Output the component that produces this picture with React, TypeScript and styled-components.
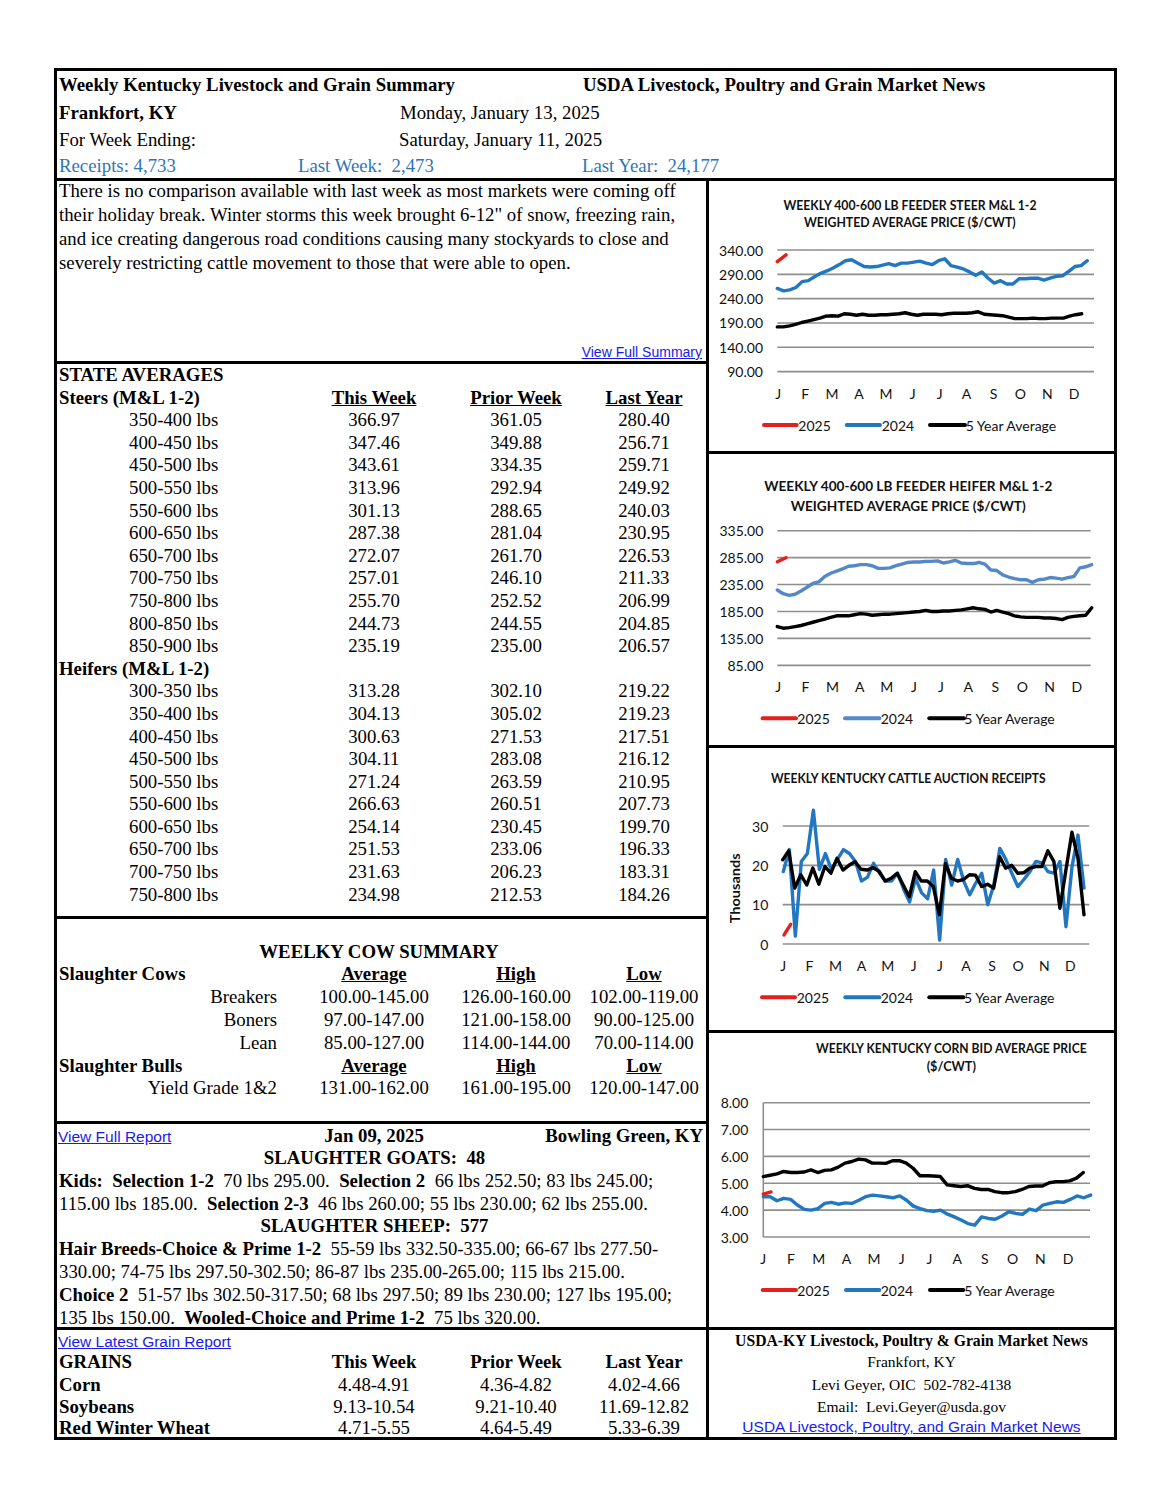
import React from "react";
import styled, { createGlobalStyle } from "styled-components";

const GlobalStyle = createGlobalStyle`
  *, *::before, *::after { box-sizing: border-box; }
  html, body { margin: 0; padding: 0; background: #ffffff; }
  body { font-family: "Liberation Serif", "Times New Roman", serif; color: #000; }
`;

const BLUE = "#2277c0";
const BLUE_LIGHT = "#5588c9";
const RED = "#e4201c";
const GRID = "#8e8e8e";
const LINK = "#1a1aee";
const COLS = "247px 140px 144px 112px 1fr";

/* ---------- page frame ---------- */
const Page = styled.div`
  margin: 68px 0 0 54px;
  width: 1063px;
  height: 1372px;
  border: 3px solid #000;
  display: flex;
  flex-direction: column;
  font-size: 18.8px;
`;

const Header = styled.header`
  flex: none;
  height: 110px;
  border-bottom: 3px solid #000;
  padding-left: 2px;
  display: grid;
  grid-template-rows: 28px 27px 27px 25px;
`;

const HeaderRow = styled.div<{ $cols: string; $blue?: boolean }>`
  display: grid;
  grid-template-columns: ${(p) => p.$cols};
  align-items: center;
  white-space: pre;
  color: ${(p) => (p.$blue ? "#2e75b6" : "#000")};
`;

const B = styled.span`
  font-weight: 700;
`;

const Main = styled.div`
  flex: none;
  display: flex;
  height: 1149px;
  border-bottom: 3px solid #000;
`;

const LeftCol = styled.div`
  width: 652px;
  flex: none;
  border-right: 3px solid #000;
  display: flex;
  flex-direction: column;
`;

const RightCol = styled.div`
  width: 405px;
  flex: none;
  display: flex;
  flex-direction: column;
`;

const Block = styled.section<{ $h: number; $last?: boolean; $pt?: number }>`
  flex: none;
  height: ${(p) => p.$h}px;
  padding-top: ${(p) => p.$pt ?? 0}px;
  border-bottom: ${(p) => (p.$last ? "none" : "3px solid #000")};
`;

/* ---------- summary ---------- */
const SummaryBlock = styled(Block)`
  display: flex;
  flex-direction: column;
  justify-content: space-between;
  padding: 0 4px 0 2px;
`;

const SummaryText = styled.p`
  margin: -2px 0 0;
  line-height: 24px;
  white-space: nowrap;
`;

const LinkRow = styled.div`
  text-align: right;
  line-height: 18px;
`;

const Link = styled.a<{ $size: number }>`
  font-family: "Liberation Sans", Arial, sans-serif;
  font-size: ${(p) => p.$size}px;
  color: ${LINK};
  text-decoration: underline;
`;

/* ---------- tables ---------- */
const Row = styled.div<{ $h: number }>`
  display: grid;
  grid-template-columns: ${COLS};
  height: ${(p) => p.$h}px;
  line-height: ${(p) => p.$h}px;
  white-space: pre;
`;

const Label = styled.div<{ $indent?: number; $bold?: boolean; $alignRight?: number }>`
  padding-left: ${(p) => (p.$alignRight !== undefined ? 0 : p.$indent ?? 2)}px;
  padding-right: ${(p) => p.$alignRight ?? 0}px;
  text-align: ${(p) => (p.$alignRight !== undefined ? "right" : "left")};
  font-weight: ${(p) => (p.$bold ? 700 : 400)};
`;

const Cell = styled.div<{ $bold?: boolean; $u?: boolean; $span?: string; $align?: string; $pr?: number }>`
  text-align: ${(p) => p.$align ?? "center"};
  font-weight: ${(p) => (p.$bold ? 700 : 400)};
  text-decoration: ${(p) => (p.$u ? "underline" : "none")};
  grid-column: ${(p) => p.$span ?? "auto"};
  padding-right: ${(p) => p.$pr ?? 0}px;
`;

const Heading = styled.div<{ $h: number; $pr: number }>`
  height: ${(p) => p.$h}px;
  line-height: ${(p) => p.$h}px;
  text-align: center;
  font-weight: 700;
  padding-right: ${(p) => p.$pr}px;
  white-space: pre;
`;

const TextLine = styled.div<{ $h: number }>`
  height: ${(p) => p.$h}px;
  line-height: ${(p) => p.$h}px;
  padding-left: 2px;
  white-space: pre;
`;

/* ---------- footer ---------- */
const FOOT_ROWS = "21px 22px 23px 21px 20px";

const Footer = styled.footer`
  flex: none;
  display: flex;
  height: 107px;
`;

const GrainBlock = styled.div`
  width: 652px;
  flex: none;
  border-right: 3px solid #000;
  display: grid;
  grid-template-rows: ${FOOT_ROWS};
`;

const GrainRow = styled.div`
  display: grid;
  grid-template-columns: ${COLS};
  align-items: center;
  white-space: pre;
`;

const ContactBlock = styled.div`
  width: 405px;
  flex: none;
  display: grid;
  grid-template-rows: ${FOOT_ROWS};
  font-size: 15.5px;
`;

const ContactLine = styled.div<{ $bold?: boolean }>`
  display: flex;
  align-items: center;
  justify-content: center;
  white-space: pre;
  font-weight: ${(p) => (p.$bold ? 700 : 400)};
  font-size: ${(p) => (p.$bold ? 15.7 : 15.5)}px;
`;

/* ---------- charts ---------- */
const ChartBox = styled(Block)`
  overflow: hidden;
`;

const ChartSvg = styled.svg`
  display: block;
  font-family: Lato, "Open Sans", "Liberation Sans", sans-serif;
`;

interface SeriesSpec {
  color: string;
  values: number[];
  x0: number;
  x1: number;
  w?: number;
}
interface LegendItem {
  color: string;
  x0: number;
  x1: number;
  tx: number;
  label: string;
}
interface ChartSpec {
  h: number;
  title: { text: string; cx: number; y: number; w: number; size: number }[];
  ticks: { label: string; value: number }[];
  y: (v: number) => number;
  labelX: number;
  gridX0: number;
  gridX1: number;
  yAxis?: boolean;
  monthY: number;
  monthX0: number;
  monthStep: number;
  legendY: number;
  legend: LegendItem[];
  series: SeriesSpec[];
  axisTitle?: { text: string; x: number; y: number; w: number };
}

const MONTHS = ["J", "F", "M", "A", "M", "J", "J", "A", "S", "O", "N", "D"];

function Chart({ spec }: { spec: ChartSpec }) {
  const top = spec.y(spec.ticks[0].value);
  const bottom = spec.y(spec.ticks[spec.ticks.length - 1].value);
  return (
    <ChartSvg width={405} height={spec.h} viewBox={`0 0 405 ${spec.h}`}>
      {spec.title.map((t) => (
        <text
          key={t.text}
          x={t.cx}
          y={t.y}
          textAnchor="middle"
          dominantBaseline="central"
          fontSize={t.size}
          fontWeight={700}
          textLength={t.w}
          lengthAdjust="spacingAndGlyphs"
          fill="#111"
        >
          {t.text}
        </text>
      ))}
      {spec.ticks.map((t) => (
        <g key={t.label}>
          <line x1={spec.gridX0} x2={spec.gridX1} y1={spec.y(t.value)} y2={spec.y(t.value)} stroke={GRID} strokeWidth={1.6} />
          <text x={spec.labelX} y={spec.y(t.value)} textAnchor="end" dominantBaseline="central" fontSize={14} fill="#111">
            {t.label}
          </text>
        </g>
      ))}
      {spec.yAxis && <line x1={spec.gridX0} x2={spec.gridX0} y1={top} y2={bottom} stroke={GRID} strokeWidth={1.6} />}
      {spec.axisTitle && (
        <text
          x={spec.axisTitle.x}
          y={spec.axisTitle.y}
          transform={`rotate(-90 ${spec.axisTitle.x} ${spec.axisTitle.y})`}
          textAnchor="middle"
          dominantBaseline="central"
          fontSize={13.5}
          fontWeight={700}
          textLength={spec.axisTitle.w}
          lengthAdjust="spacingAndGlyphs"
          fill="#111"
        >
          {spec.axisTitle.text}
        </text>
      )}
      {spec.series.map((s, si) => {
        const n = s.values.length;
        const pts = s.values
          .map((v, i) => `${(s.x0 + ((s.x1 - s.x0) * i) / (n - 1)).toFixed(2)},${spec.y(v).toFixed(2)}`)
          .join(" ");
        return (
          <polyline
            key={si}
            points={pts}
            fill="none"
            stroke={s.color}
            strokeWidth={s.w ?? 3.4}
            strokeLinejoin="round"
            strokeLinecap="round"
          />
        );
      })}
      {MONTHS.map((m, i) => (
        <text
          key={i}
          x={spec.monthX0 + spec.monthStep * i}
          y={spec.monthY}
          textAnchor="middle"
          dominantBaseline="central"
          fontSize={14}
          fill="#111"
        >
          {m}
        </text>
      ))}
      {spec.legend.map((l) => (
        <g key={l.label}>
          <line x1={l.x0} x2={l.x1} y1={spec.legendY} y2={spec.legendY} stroke={l.color} strokeWidth={4} strokeLinecap="round" />
          <text x={l.tx} y={spec.legendY} dominantBaseline="central" fontSize={14} fill="#111">
            {l.label}
          </text>
        </g>
      ))}
    </ChartSvg>
  );
}

const legendSet = (blue: string, red: number[], bl: number[], bk: number[]): LegendItem[] => [
  { color: RED, x0: red[0], x1: red[1], tx: red[2], label: "2025" },
  { color: blue, x0: bl[0], x1: bl[1], tx: bl[2], label: "2024" },
  { color: "#000", x0: bk[0], x1: bk[1], tx: bk[2], label: "5 Year Average" },
];

const steerChart: ChartSpec = {
  h: 270,
  title: [
    { text: "WEEKLY 400-600 LB FEEDER STEER M&L 1-2", cx: 201, y: 24, w: 253, size: 12.5 },
    { text: "WEIGHTED AVERAGE PRICE ($/CWT)", cx: 200.8, y: 41.7, w: 211.7, size: 12.5 },
  ],
  ticks: [340, 290, 240, 190, 140, 90].map((v) => ({ label: v.toFixed(2), value: v })),
  y: (v) => 69 + (340 - v) * 0.4866,
  labelX: 54,
  gridX0: 68.3,
  gridX1: 385,
  monthY: 212.3,
  monthX0: 69.3,
  monthStep: 26.9,
  legendY: 244,
  legend: legendSet(BLUE, [55, 87.7, 89.3], [137.7, 171, 172.7], [221, 256, 256.7]),
  series: [
    {
      color: "#000",
      x0: 68.3,
      x1: 372.7,
      values: [182, 182, 184, 187, 191, 194, 197, 200, 204, 205, 204, 209, 208, 206, 208, 206, 206, 207, 207, 208, 209, 211, 208, 206, 208, 208, 208, 207, 209, 210, 210, 210, 211, 213, 208, 207, 206, 205, 202, 199, 199, 199, 200, 199, 199, 200, 200, 200, 204, 207, 209],
    },
    {
      color: BLUE,
      x0: 68.3,
      x1: 378.3,
      values: [261, 256, 258, 263, 275, 277, 285, 292, 297, 303, 310, 318, 320, 313, 306, 305, 306, 309, 312, 308, 313, 313, 315, 317, 313, 310, 318, 322, 308, 305, 301, 295, 288, 295, 282, 272, 277, 270, 270, 281, 281, 282, 282, 278, 282, 286, 287, 296, 306, 308, 318],
    },
    { color: RED, x0: 68.3, x1: 77, values: [316, 330] },
  ],
};

const heiferChart: ChartSpec = {
  h: 291,
  title: [
    { text: "WEEKLY 400-600 LB FEEDER HEIFER M&L 1-2", cx: 199.3, y: 31, w: 288, size: 14 },
    { text: "WEIGHTED AVERAGE PRICE ($/CWT)", cx: 199.2, y: 51, w: 235, size: 14 },
  ],
  ticks: [335, 285, 235, 185, 135, 85].map((v) => ({ label: v.toFixed(2), value: v })),
  y: (v) => 76.7 + (335 - v) * 0.5386,
  labelX: 54.3,
  gridX0: 68.3,
  gridX1: 381.7,
  monthY: 232.7,
  monthX0: 69.3,
  monthStep: 27.13,
  legendY: 264.3,
  legend: legendSet(BLUE_LIGHT, [53.7, 87, 88.3], [136, 170.3, 171.7], [220.3, 255, 255.3]),
  series: [
    {
      color: "#000",
      x0: 68.3,
      x1: 382.7,
      values: [157, 154, 155, 157, 159, 162, 165, 168, 171, 174, 177, 177, 177, 179, 181, 180, 178, 179, 180, 180, 181, 182, 183, 184, 185, 187, 185, 185, 186, 186, 187, 188, 190, 192, 190, 189, 184, 187, 184, 181, 177, 175, 174, 174, 174, 173, 173, 172, 170, 174, 176, 177, 178, 192],
    },
    {
      color: BLUE_LIGHT,
      x0: 68.3,
      x1: 382.7,
      values: [225, 218, 215, 217, 223, 230, 237, 240, 250, 256, 260, 264, 269, 270, 272, 272, 270, 265, 265, 266, 270, 273, 276, 277, 277, 278, 278, 279, 275, 277, 280, 275, 274, 274, 276, 273, 262, 261, 253, 249, 246, 244, 244, 239, 244, 245, 248, 247, 245, 248, 250, 266, 268, 272],
    },
    { color: RED, x0: 68.3, x1: 77, values: [277.4, 284.8] },
  ],
};

const receiptsChart: ChartSpec = {
  h: 282,
  title: [{ text: "WEEKLY KENTUCKY CATTLE AUCTION RECEIPTS", cx: 199.3, y: 30.3, w: 274.7, size: 12.5 }],
  ticks: [30, 20, 10, 0].map((v) => ({ label: String(v), value: v })),
  y: (v) => 196 - v * 3.933,
  labelX: 59.3,
  gridX0: 73.7,
  gridX1: 380.3,
  monthY: 217,
  monthX0: 74.3,
  monthStep: 26.1,
  legendY: 249.3,
  legend: legendSet(BLUE, [53, 86, 87.7], [136.3, 170.3, 171.7], [220.3, 254.3, 255]),
  axisTitle: { text: "Thousands", x: 26, y: 140.3, w: 70 },
  series: [
    {
      color: BLUE,
      x0: 74.3,
      x1: 375,
      values: [18.4, 24, 2, 21, 23, 34, 19, 23, 19, 21.5, 24, 23, 21, 16, 17, 20.5, 18, 16, 16, 18, 14, 10.7, 16.7, 13, 11.5, 18.8, 1, 21.5, 15, 21.5, 16, 12.5, 15.5, 18, 10, 15, 24.3, 21.5, 18, 14.6, 16.4, 18.4, 21, 20.6, 18.4, 18, 21, 4.4, 19.6, 27.7, 14.2],
    },
    {
      color: "#000",
      x0: 73.7,
      x1: 375,
      values: [21.4, 23.7, 14.2, 17.6, 15, 19.3, 15.2, 19.7, 18, 21.8, 18.8, 20, 20.9, 19, 18.8, 19.4, 18.5, 16, 16.7, 18, 15, 12, 18.4, 16, 16, 14.6, 7.4, 20.5, 16.7, 16, 16.4, 17.6, 17.5, 14.6, 15.2, 14.2, 22.2, 19.3, 20, 18, 18.1, 19.3, 19.7, 19.7, 23.7, 21, 9.1, 18.8, 28.4, 21.8, 7.4],
    },
    { color: RED, x0: 75, x1: 81.7, values: [2.3, 5] },
  ],
};

const cornChart: ChartSpec = {
  h: 294,
  title: [
    { text: "WEEKLY KENTUCKY CORN BID AVERAGE PRICE", cx: 242.3, y: 15.3, w: 270.7, size: 12.5 },
    { text: "($/CWT)", cx: 242.3, y: 33.7, w: 49.3, size: 12.5 },
  ],
  ticks: [8, 7, 6, 5, 4, 3].map((v) => ({ label: v.toFixed(2), value: v })),
  y: (v) => 69.7 + (8 - v) * 26.86,
  labelX: 39.3,
  gridX0: 54.3,
  gridX1: 381,
  yAxis: true,
  monthY: 225.3,
  monthX0: 54.3,
  monthStep: 27.7,
  legendY: 257,
  legend: legendSet(BLUE, [53.7, 87, 88.3], [137, 170.3, 171.7], [221, 254.3, 255.3]),
  series: [
    {
      color: "#000",
      x0: 54.3,
      x1: 374.3,
      values: [5.25, 5.3, 5.35, 5.44, 5.4, 5.4, 5.42, 5.5, 5.4, 5.48, 5.5, 5.6, 5.75, 5.81, 5.9, 5.87, 5.75, 5.75, 5.74, 5.84, 5.84, 5.75, 5.56, 5.28, 5.28, 5.27, 5.25, 4.94, 4.91, 4.88, 4.91, 4.81, 4.77, 4.77, 4.69, 4.65, 4.65, 4.69, 4.77, 4.88, 4.9, 4.9, 5.02, 5.06, 5.06, 5.09, 5.19, 5.4],
    },
    {
      color: BLUE,
      x0: 54.3,
      x1: 381.7,
      values: [4.5, 4.5, 4.35, 4.44, 4.4, 4.19, 4.03, 4.0, 4.06, 4.25, 4.29, 4.22, 4.27, 4.25, 4.37, 4.5, 4.56, 4.53, 4.5, 4.46, 4.53, 4.37, 4.15, 4.06, 3.98, 3.96, 4.0, 3.85, 3.75, 3.63, 3.5, 3.44, 3.75, 3.69, 3.66, 3.78, 3.94, 3.88, 3.84, 4.04, 3.98, 4.19, 4.25, 4.31, 4.29, 4.4, 4.53, 4.46, 4.56],
    },
    { color: RED, x0: 54.3, x1: 62, values: [4.6, 4.68] },
  ],
};

/* ---------- data ---------- */
type PriceRow = [string, string, string, string];

const steers: PriceRow[] = [
  ["350-400 lbs", "366.97", "361.05", "280.40"],
  ["400-450 lbs", "347.46", "349.88", "256.71"],
  ["450-500 lbs", "343.61", "334.35", "259.71"],
  ["500-550 lbs", "313.96", "292.94", "249.92"],
  ["550-600 lbs", "301.13", "288.65", "240.03"],
  ["600-650 lbs", "287.38", "281.04", "230.95"],
  ["650-700 lbs", "272.07", "261.70", "226.53"],
  ["700-750 lbs", "257.01", "246.10", "211.33"],
  ["750-800 lbs", "255.70", "252.52", "206.99"],
  ["800-850 lbs", "244.73", "244.55", "204.85"],
  ["850-900 lbs", "235.19", "235.00", "206.57"],
];

const heifers: PriceRow[] = [
  ["300-350 lbs", "313.28", "302.10", "219.22"],
  ["350-400 lbs", "304.13", "305.02", "219.23"],
  ["400-450 lbs", "300.63", "271.53", "217.51"],
  ["450-500 lbs", "304.11", "283.08", "216.12"],
  ["500-550 lbs", "271.24", "263.59", "210.95"],
  ["550-600 lbs", "266.63", "260.51", "207.73"],
  ["600-650 lbs", "254.14", "230.45", "199.70"],
  ["650-700 lbs", "251.53", "233.06", "196.33"],
  ["700-750 lbs", "231.63", "206.23", "183.31"],
  ["750-800 lbs", "234.98", "212.53", "184.26"],
];

const cows: PriceRow[] = [
  ["Breakers", "100.00-145.00", "126.00-160.00", "102.00-119.00"],
  ["Boners", "97.00-147.00", "121.00-158.00", "90.00-125.00"],
  ["Lean", "85.00-127.00", "114.00-144.00", "70.00-114.00"],
];

const grains: PriceRow[] = [
  ["Corn", "4.48-4.91", "4.36-4.82", "4.02-4.66"],
  ["Soybeans", "9.13-10.54", "9.21-10.40", "11.69-12.82"],
  ["Red Winter Wheat", "4.71-5.55", "4.64-5.49", "5.33-6.39"],
];

const SA_H = 22.6;
const COW_H = 22.8;

function PriceRows({ rows, h }: { rows: PriceRow[]; h: number }) {
  return (
    <>
      {rows.map((r) => (
        <Row key={r[0] + r[1]} $h={h}>
          <Label $indent={72}>{r[0]}</Label>
          <Cell>{r[1]}</Cell>
          <Cell>{r[2]}</Cell>
          <Cell>{r[3]}</Cell>
        </Row>
      ))}
    </>
  );
}

function ColumnHeads({ title, h, heads }: { title: string; h: number; heads: string[] }) {
  return (
    <Row $h={h}>
      <Label $bold>{title}</Label>
      {heads.map((x) => (
        <Cell key={x} $bold $u>
          {x}
        </Cell>
      ))}
    </Row>
  );
}

export default function App() {
  return (
    <>
      <GlobalStyle />
      <Page>
        <Header>
          <HeaderRow $cols="524px 1fr">
            <B>Weekly Kentucky Livestock and Grain Summary</B>
            <B>USDA Livestock, Poultry and Grain Market News</B>
          </HeaderRow>
          <HeaderRow $cols="341px 1fr">
            <B>Frankfort, KY</B>
            <span>Monday, January 13, 2025</span>
          </HeaderRow>
          <HeaderRow $cols="340px 1fr">
            <span>For Week Ending:</span>
            <span>Saturday, January 11, 2025</span>
          </HeaderRow>
          <HeaderRow $cols="239px 284px 1fr" $blue>
            <span>Receipts: 4,733</span>
            <span>Last Week:  2,473</span>
            <span>Last Year:  24,177</span>
          </HeaderRow>
        </Header>

        <Main>
          <LeftCol>
            <SummaryBlock $h={183}>
              <SummaryText>
                There is no comparison available with last week as most markets were coming off
                <br />
                their holiday break. Winter storms this week brought 6-12" of snow, freezing rain,
                <br />
                and ice creating dangerous road conditions causing many stockyards to close and
                <br />
                severely restricting cattle movement to those that were able to open.
              </SummaryText>
              <LinkRow>
                <Link $size={14} href="#">
                  View Full Summary
                </Link>
              </LinkRow>
            </SummaryBlock>

            <Block $h={555}>
              <Row $h={SA_H}>
                <Label $bold>STATE AVERAGES</Label>
              </Row>
              <ColumnHeads title="Steers (M&L 1-2)" h={SA_H} heads={["This Week", "Prior Week", "Last Year"]} />
              <PriceRows rows={steers} h={SA_H} />
              <Row $h={SA_H}>
                <Label $bold>Heifers (M&L 1-2)</Label>
              </Row>
              <PriceRows rows={heifers} h={SA_H} />
            </Block>

            <Block $h={205} $pt={21.6}>
              <Heading $h={COW_H} $pr={5}>
                WEELKY COW SUMMARY
              </Heading>
              <ColumnHeads title="Slaughter Cows" h={COW_H} heads={["Average", "High", "Low"]} />
              {cows.map((r) => (
                <Row key={r[0]} $h={COW_H}>
                  <Label $alignRight={27}>{r[0]}</Label>
                  <Cell>{r[1]}</Cell>
                  <Cell>{r[2]}</Cell>
                  <Cell>{r[3]}</Cell>
                </Row>
              ))}
              <ColumnHeads title="Slaughter Bulls" h={COW_H} heads={["Average", "High", "Low"]} />
              <Row $h={COW_H}>
                <Label $alignRight={27}>Yield Grade 1&amp;2</Label>
                <Cell>131.00-162.00</Cell>
                <Cell>161.00-195.00</Cell>
                <Cell>120.00-147.00</Cell>
              </Row>
            </Block>

            <Block $h={203} $last>
              <Row $h={23}>
                <Label $indent={1}>
                  <Link $size={15.5} href="#">
                    View Full Report
                  </Link>
                </Label>
                <Cell $bold>Jan 09, 2025</Cell>
                <Cell $bold $span="3 / 6" $align="right" $pr={3}>
                  Bowling Green, KY
                </Cell>
              </Row>
              <Heading $h={22.8} $pr={14}>
                SLAUGHTER GOATS:  48
              </Heading>
              <TextLine $h={22.8}>
                <B>Kids:  Selection 1-2</B>  70 lbs 295.00.  <B>Selection 2</B>  66 lbs 252.50; 83 lbs 245.00;
              </TextLine>
              <TextLine $h={22.8}>
                115.00 lbs 185.00.  <B>Selection 2-3</B>  46 lbs 260.00; 55 lbs 230.00; 62 lbs 255.00.
              </TextLine>
              <Heading $h={22.8} $pr={14}>
                SLAUGHTER SHEEP:  577
              </Heading>
              <TextLine $h={22.8}>
                <B>Hair Breeds-Choice &amp; Prime 1-2</B>  55-59 lbs 332.50-335.00; 66-67 lbs 277.50-
              </TextLine>
              <TextLine $h={22.8}>330.00; 74-75 lbs 297.50-302.50; 86-87 lbs 235.00-265.00; 115 lbs 215.00.</TextLine>
              <TextLine $h={22.8}>
                <B>Choice 2</B>  51-57 lbs 302.50-317.50; 68 lbs 297.50; 89 lbs 230.00; 127 lbs 195.00;
              </TextLine>
              <TextLine $h={22.8}>
                135 lbs 150.00.  <B>Wooled-Choice and Prime 1-2</B>  75 lbs 320.00.
              </TextLine>
            </Block>
          </LeftCol>

          <RightCol>
            <ChartBox $h={273}>
              <Chart spec={steerChart} />
            </ChartBox>
            <ChartBox $h={294}>
              <Chart spec={heiferChart} />
            </ChartBox>
            <ChartBox $h={285}>
              <Chart spec={receiptsChart} />
            </ChartBox>
            <ChartBox $h={294} $last>
              <Chart spec={cornChart} />
            </ChartBox>
          </RightCol>
        </Main>

        <Footer>
          <GrainBlock>
            <GrainRow>
              <Label $indent={1}>
                <Link $size={15.5} href="#">
                  View Latest Grain Report
                </Link>
              </Label>
            </GrainRow>
            <GrainRow>
              <Label $bold>GRAINS</Label>
              <Cell $bold>This Week</Cell>
              <Cell $bold>Prior Week</Cell>
              <Cell $bold>Last Year</Cell>
            </GrainRow>
            {grains.map((g) => (
              <GrainRow key={g[0]}>
                <Label $bold>{g[0]}</Label>
                <Cell>{g[1]}</Cell>
                <Cell>{g[2]}</Cell>
                <Cell>{g[3]}</Cell>
              </GrainRow>
            ))}
          </GrainBlock>
          <ContactBlock>
            <ContactLine $bold>USDA-KY Livestock, Poultry &amp; Grain Market News</ContactLine>
            <ContactLine>Frankfort, KY</ContactLine>
            <ContactLine>Levi Geyer, OIC  502-782-4138</ContactLine>
            <ContactLine>Email:  Levi.Geyer@usda.gov</ContactLine>
            <ContactLine>
              <Link $size={15.5} href="#">
                USDA Livestock, Poultry, and Grain Market News
              </Link>
            </ContactLine>
          </ContactBlock>
        </Footer>
      </Page>
    </>
  );
}
